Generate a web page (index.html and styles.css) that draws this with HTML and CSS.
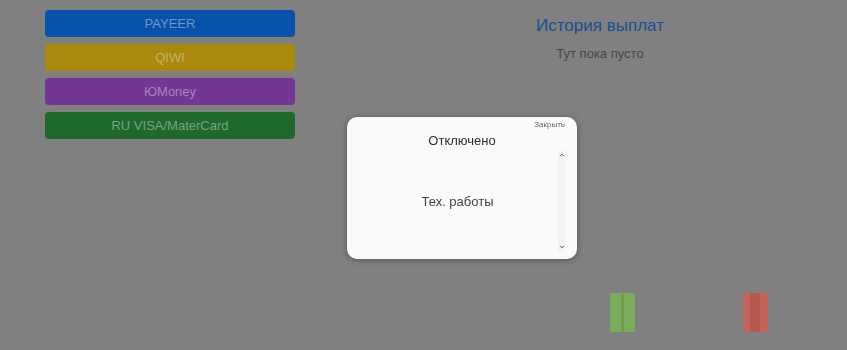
FILE: index.html
```html
<!DOCTYPE html>
<html>
<head>
    <meta charset="UTF-8">
    <title>Вывод средств</title>
    <link rel="stylesheet" href="styles.css">
</head>
<body>
    <div class="page">
        <div class="methods">
            <button class="method payeer">PAYEER</button>
            <button class="method qiwi">QIWI</button>
            <button class="method yoomoney">ЮMoney</button>
            <button class="method card">RU VISA/MaterCard</button>
        </div>

        <div class="history">
            <h2>История выплат</h2>
            <p>Тут пока пусто</p>
            <div class="marks">
                <span class="mark ok"></span>
                <span class="mark no"></span>
            </div>
        </div>
    </div>

    <div class="modal">
        <div class="modal-close">Закрыть</div>
        <div class="modal-title">Отключено</div>
        <div class="modal-body">
            <div class="modal-text">Тех. работы</div>
            <div class="scroll">
                <svg width="6" height="4" viewBox="0 0 6 4"><path d="M1 3.2 L3 1.2 L5 3.2" fill="none" stroke="#555" stroke-width="1"/></svg>
                <svg width="6" height="4" viewBox="0 0 6 4"><path d="M1 0.8 L3 2.8 L5 0.8" fill="none" stroke="#555" stroke-width="1"/></svg>
            </div>
        </div>
    </div>
</body>
</html>
```

FILE: styles.css
```css
body {
    margin: 0;
    background-color: #7f807f;
    font-family: "Liberation Sans", Arial, sans-serif;
    height: 350px;
    overflow: hidden;
}
.page {
    display: grid;
    grid-template-columns: 353px 1fr;
}
.methods {
    display: flex;
    flex-direction: column;
    gap: 7px;
    padding: 10px 0 0 45px;
}
.method {
    width: 250px;
    height: 27px;
    border: none;
    border-radius: 4px;
    font-family: inherit;
    font-size: 13px;
    color: rgba(215, 215, 215, 0.5);
    padding: 0;
}
.payeer {
    background-color: #0752ab;
}
.qiwi {
    background-color: #a98a0c;
}
.yoomoney {
    background-color: #743694;
}
.card {
    background-color: #1d6a2b;
}
.history {
    text-align: center;
}
.history h2 {
    margin: 16px 0 0;
    font-size: 17px;
    font-weight: normal;
    color: #1b4f93;
}
.history p {
    margin: 10px 0 0;
    font-size: 13px;
    color: #474747;
}
.marks {
    display: flex;
    gap: 108px;
    margin: 232px 0 0 257px;
}
.mark {
    width: 25px;
    height: 39px;
    border-radius: 2px;
}
.mark.ok {
    background: linear-gradient(90deg, #79ad5b 0 44%, #6e9f52 44% 56%, #79ad5b 56%);
}
.mark.no {
    background: linear-gradient(90deg, #c3645b 0 30%, #b7574f 30% 70%, #c3645b 70%);
}
.modal {
    position: fixed;
    left: 347px;
    top: 117px;
    width: 230px;
    height: 142px;
    box-sizing: border-box;
    background-color: #f9fafc;
    border-radius: 10px;
    box-shadow: 0 1px 6px rgba(0, 0, 0, 0.35);
    padding: 3px 12px 8px 10px;
}
.modal-close {
    text-align: right;
    font-size: 8px;
    color: #666;
}
.modal-title {
    text-align: center;
    font-size: 13px;
    color: #2f2f2f;
    margin-top: 4px;
    padding-left: 2px;
}
.modal-body {
    display: flex;
    height: 100px;
    margin-top: 3px;
}
.modal-text {
    flex: 1;
    display: flex;
    align-items: center;
    justify-content: center;
    font-size: 13px;
    color: #444;
}
.scroll {
    width: 7px;
    display: flex;
    flex-direction: column;
    justify-content: space-between;
    align-items: center;
    padding: 2px 0;
    background-color: #f1f2f4;
}
```
